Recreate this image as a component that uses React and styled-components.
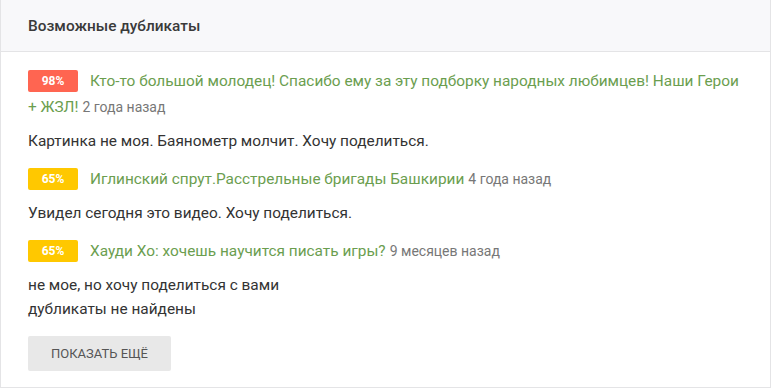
import React from 'react'
import styled, { createGlobalStyle } from 'styled-components'

const Global = createGlobalStyle`
	body {
		margin: 0;
		background: #fff;
		font-family: Roboto, "Noto Sans", sans-serif;
	}
`

const Card = styled.div`
	width: 771px;
	box-sizing: border-box;
	border: 1px solid #e4e4e6;
	border-top: none;
	background: #fff;
`

const Header = styled.div`
	height: 52px;
	box-sizing: border-box;
	padding: 0 27px;
	display: flex;
	align-items: center;
	background: #f8f8fa;
	border-bottom: 1px solid #e4e4e6;
	font-size: 15.4px;
	font-weight: 500;
	color: #3a3a3a;
`

const Body = styled.div`
	padding: 16px 27px 16px;
`

const Item = styled.div`
	margin-bottom: 13px;
`

const TitleLine = styled.div`
	font-size: 15.4px;
	line-height: 26px;
`

const Badge = styled.span`
	display: inline-block;
	width: 50px;
	height: 22px;
	line-height: 22px;
	margin-right: 12px;
	border-radius: 2px;
	background: ${p => (p.$hot ? '#ff6551' : '#ffc800')};
	color: #fff;
	font-size: 12px;
	font-weight: 700;
	text-align: center;
	vertical-align: 1px;
`

const Link = styled.a`
	color: #6b9e4f;
	text-decoration: none;
`

const Ago = styled.span`
	color: #777;
	font-size: 14px;
	margin-left: 4px;
`

const Desc = styled.div`
	margin-top: 9px;
	font-size: 15.4px;
	line-height: 24px;
	color: #333;
`

const Empty = styled.div`
	margin-top: -13px;
	font-size: 15.4px;
	line-height: 24px;
	color: #333;
`

const MoreButton = styled.button`
	margin-top: 15px;
	width: 143px;
	height: 35px;
	border: none;
	border-radius: 2px;
	background: #e8e8e8;
	color: #555;
	font-family: Roboto, sans-serif;
	font-size: 13px;
	text-transform: uppercase;
	cursor: pointer;
`

const duplicates = [
	{
		pct: 98,
		title: 'Кто-то большой молодец! Спасибо ему за эту подборку народных любимцев! Наши Герои + ЖЗЛ!',
		ago: '2 года назад',
		desc: 'Картинка не моя. Баянометр молчит. Хочу поделиться.',
	},
	{
		pct: 65,
		title: 'Иглинский спрут.Расстрельные бригады Башкирии',
		ago: '4 года назад',
		desc: 'Увидел сегодня это видео. Хочу поделиться.',
	},
	{
		pct: 65,
		title: 'Хауди Хо: хочешь научится писать игры?',
		ago: '9 месяцев назад',
		desc: 'не мое, но хочу поделиться с вами',
	},
]

export default function App() {
	return (
		<>
			<Global />
			<Card>
				<Header>Возможные дубликаты</Header>
				<Body>
					{duplicates.map((d, i) => (
						<Item key={i}>
							<TitleLine>
								<Badge $hot={d.pct > 90}>{d.pct}%</Badge>
								<Link href="#">{d.title}</Link>
								<Ago>{d.ago}</Ago>
							</TitleLine>
							<Desc>{d.desc}</Desc>
						</Item>
					))}
					<Empty>дубликаты не найдены</Empty>
					<MoreButton>Показать ещё</MoreButton>
				</Body>
			</Card>
		</>
	)
}
